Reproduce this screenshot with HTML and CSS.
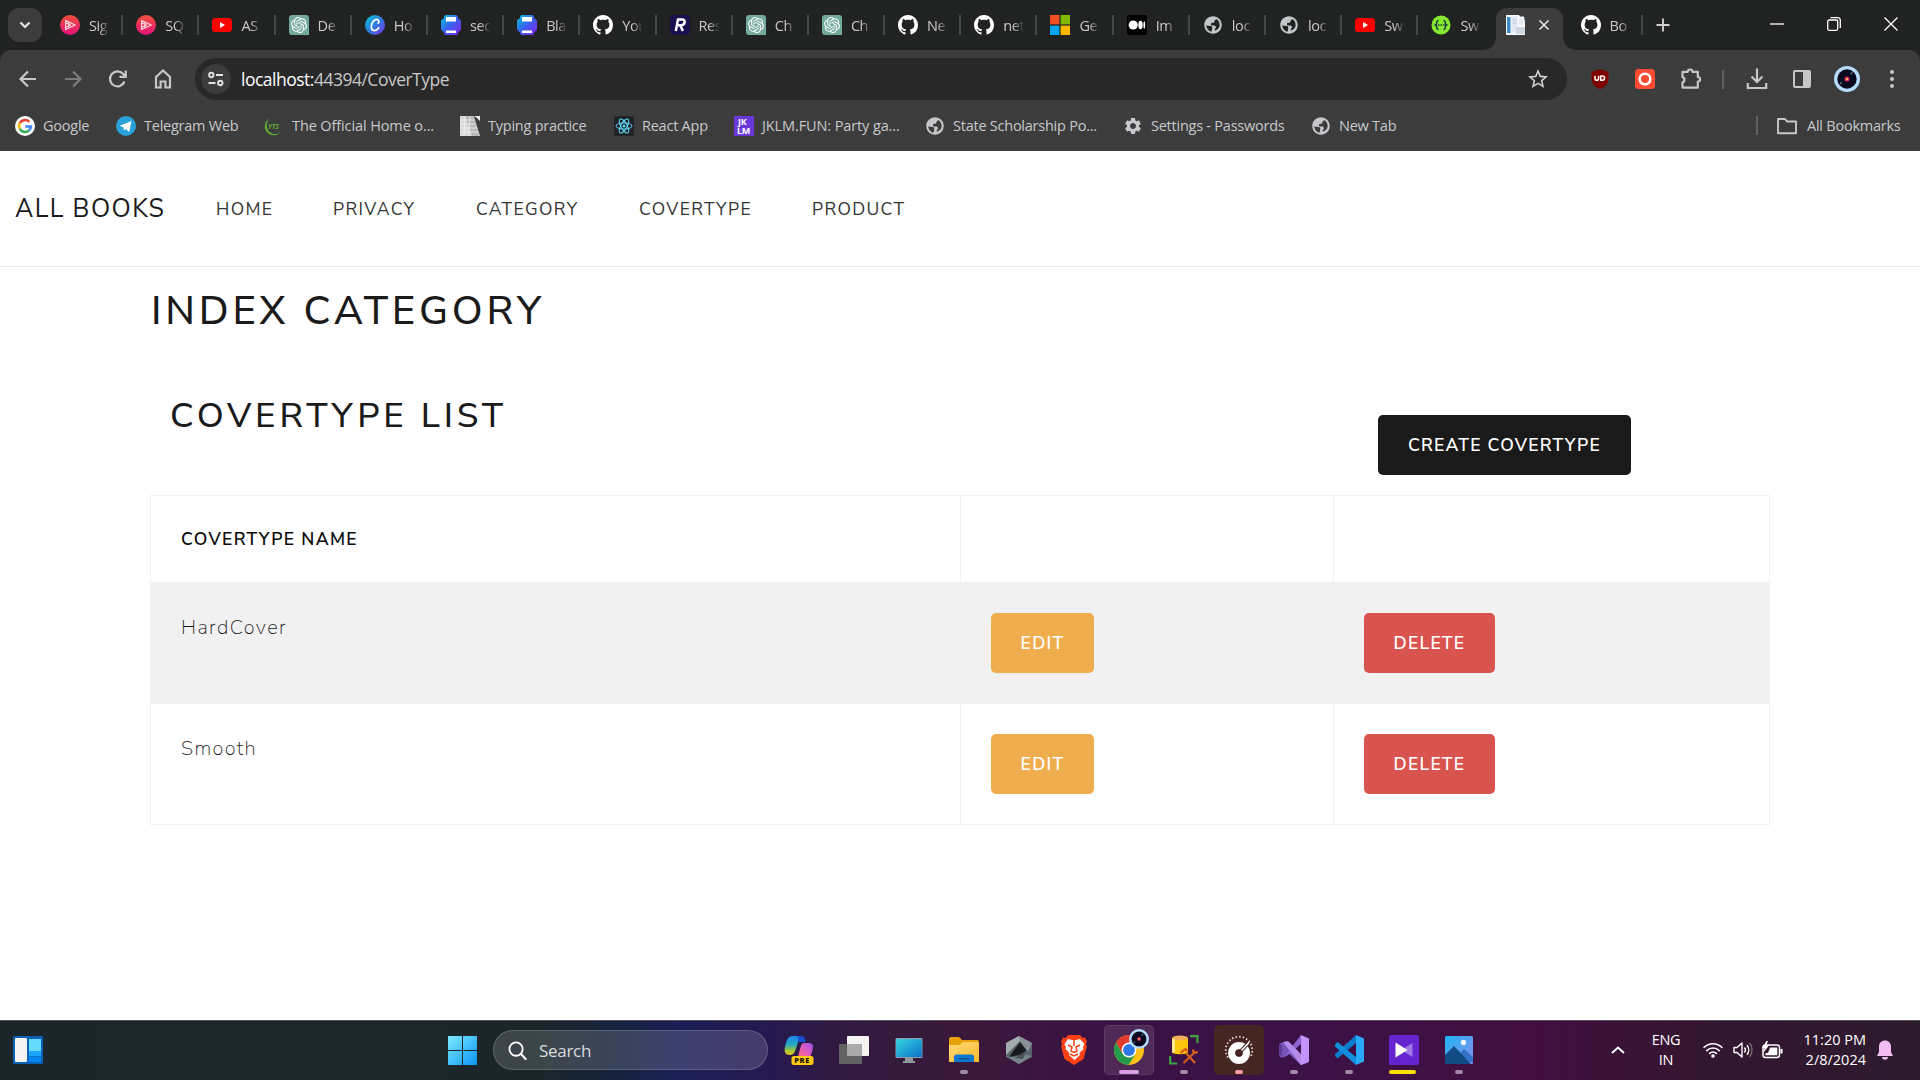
FILE: index.html
```html
<!DOCTYPE html>
<html lang="en">
<head>
<meta charset="utf-8">
<title>Index Category</title>
<link rel="stylesheet" href="styles.css">
</head>
<body>
<svg width="0" height="0" class="defs" aria-hidden="true">
  <defs>
    <linearGradient id="gPlay" x1="0" y1="0" x2="0" y2="1"><stop offset="0" stop-color="#f0503a"/><stop offset="1" stop-color="#e6127e"/></linearGradient>
    <linearGradient id="gCanva" x1="0" y1="0" x2="1" y2="1"><stop offset="0" stop-color="#06c3cc"/><stop offset=".5" stop-color="#2f7fe0"/><stop offset="1" stop-color="#7d2ae8"/></linearGradient>
    <linearGradient id="gPrint" x1="0" y1="0" x2="1" y2="1"><stop offset="0" stop-color="#04c8dc"/><stop offset=".5" stop-color="#3b5fee"/><stop offset="1" stop-color="#8a22f0"/></linearGradient>
    <linearGradient id="gStart" x1="0" y1="0" x2="1" y2="1"><stop offset="0" stop-color="#7deaff"/><stop offset="1" stop-color="#0a95f5"/></linearGradient>
    <linearGradient id="gScreen" x1="0" y1="0" x2="1" y2="1"><stop offset="0" stop-color="#35d5e4"/><stop offset="1" stop-color="#0b72c6"/></linearGradient>
    <linearGradient id="gFolder" x1="0" y1="0" x2="1" y2="1"><stop offset="0" stop-color="#ffdb74"/><stop offset="1" stop-color="#fbb92e"/></linearGradient>
    <linearGradient id="gCopA" x1="0" y1="0" x2="0" y2="1"><stop offset="0" stop-color="#1787e8"/><stop offset=".45" stop-color="#27a9c4"/><stop offset=".75" stop-color="#96c83c"/><stop offset="1" stop-color="#f7c61d"/></linearGradient>
    <linearGradient id="gCopB" x1="1" y1="0" x2="0" y2="1"><stop offset="0" stop-color="#9c4ff0"/><stop offset=".5" stop-color="#ee5fae"/><stop offset="1" stop-color="#ff7a45"/></linearGradient>
    <linearGradient id="gPhoto" x1="0" y1="0" x2="1" y2="1"><stop offset="0" stop-color="#1fb4f0"/><stop offset="1" stop-color="#8b8cf0"/></linearGradient>
    <symbol id="play" viewBox="0 0 20 20"><circle cx="10" cy="10" r="10" fill="url(#gPlay)"/><path d="M5.600 5.600v8.800L15.300 10zM5.600 7.800l5 2.200-5 2.200M8.800 7v6" fill="none" stroke="#ffd5d8" stroke-width="1.200" stroke-linejoin="round"/></symbol>
    <symbol id="youtube" viewBox="0 0 20 20"><rect y="3" width="20" height="14" rx="3.600" fill="#f00"/><path d="M8 7v6l5-3z" fill="#fff"/></symbol>
    <symbol id="gpt" viewBox="0 0 20 20"><path d="M3 0h14a3 3 0 0 1 3 3v17H3a3 3 0 0 1-3-3V3a3 3 0 0 1 3-3z" fill="#74aa9c"/><g transform="translate(2 2) scale(.667)" fill="#fff"><path d="M22.2819 9.8211a5.9847 5.9847 0 0 0-.5157-4.9108 6.0462 6.0462 0 0 0-6.5098-2.9A6.0651 6.0651 0 0 0 4.9807 4.1818a5.9847 5.9847 0 0 0-3.9977 2.9 6.0462 6.0462 0 0 0 .7427 7.0966 5.98 5.98 0 0 0 .511 4.9107 6.051 6.051 0 0 0 6.5146 2.9001A5.9847 5.9847 0 0 0 13.2599 24a6.0557 6.0557 0 0 0 5.7718-4.2058 5.9894 5.9894 0 0 0 3.9977-2.9001 6.0557 6.0557 0 0 0-.7475-7.0729zm-9.022 12.6081a4.4755 4.4755 0 0 1-2.8764-1.0408l.1419-.0804 4.7783-2.7582a.7948.7948 0 0 0 .3927-.6813v-6.7369l2.02 1.1686a.071.071 0 0 1 .038.052v5.5826a4.504 4.504 0 0 1-4.4945 4.4944zm-9.6607-4.1254a4.4708 4.4708 0 0 1-.5346-3.0137l.142.0852 4.783 2.7582a.7712.7712 0 0 0 .7806 0l5.8428-3.3685v2.3324a.0804.0804 0 0 1-.0332.0615L9.74 19.9502a4.4992 4.4992 0 0 1-6.1408-1.6464zM2.3408 7.8956a4.485 4.485 0 0 1 2.3655-1.9728V11.6a.7664.7664 0 0 0 .3879.6765l5.8144 3.3543-2.0201 1.1685a.0757.0757 0 0 1-.071 0l-4.8303-2.7865A4.504 4.504 0 0 1 2.3408 7.872zm16.5963 3.8558L13.1038 8.364 15.1192 7.2a.0757.0757 0 0 1 .071 0l4.8303 2.7913a4.4944 4.4944 0 0 1-.6765 8.1042v-5.6772a.79.79 0 0 0-.407-.667zm2.0107-3.0231l-.142-.0852-4.7735-2.7818a.7759.7759 0 0 0-.7854 0L9.409 9.2297V6.8974a.0662.0662 0 0 1 .0284-.0615l4.8303-2.7866a4.4992 4.4992 0 0 1 6.6802 4.66zM8.3065 12.863l-2.02-1.1638a.0804.0804 0 0 1-.038-.0567V6.0742a4.4992 4.4992 0 0 1 7.3757-3.4537l-.142.0805L8.704 5.459a.7948.7948 0 0 0-.3927.6813zm1.0976-2.3654l2.602-1.4998 2.6069 1.4998v2.9994l-2.5974 1.4997-2.6067-1.4997Z"/></g></symbol>
    <symbol id="canva" viewBox="0 0 20 20"><circle cx="10" cy="10" r="10" fill="url(#gCanva)"/><path d="M13.200 8.200c1.300-1.600.6-3.800-1.400-3.800-3 0-5.500 3.800-5.500 7.200 0 2.500 1.300 4 3.200 4 1.900 0 3.400-1.300 4.300-2.900" fill="none" stroke="#fff" stroke-width="1.700" stroke-linecap="round"/></symbol>
    <symbol id="printer" viewBox="0 0 20 20"><path d="M4.500 0h11l1.500 1.500V3l3 2.500v9L17.500 17 16 20H4l-1.500-3L0 14.500v-9L3 3V1.500z" fill="url(#gPrint)"/><path d="M5 2h10v4.500H5zM5 15.500h10V18H5z" fill="#fff"/></symbol>
    <symbol id="github" viewBox="0 0 16 16"><path fill="#fff" d="M8 0C3.58 0 0 3.58 0 8c0 3.54 2.29 6.53 5.47 7.59.4.07.55-.17.55-.38 0-.19-.01-.82-.01-1.49-2.01.37-2.53-.49-2.69-.94-.09-.23-.48-.94-.82-1.13-.28-.15-.68-.52-.01-.53.63-.01 1.08.58 1.23.82.72 1.21 1.87.87 2.33.66.07-.52.28-.87.51-1.07-1.78-.2-3.64-.89-3.64-3.95 0-.87.31-1.59.82-2.15-.08-.2-.36-1.02.08-2.12 0 0 .67-.21 2.2.82.64-.18 1.32-.27 2-.27.68 0 1.36.09 2 .27 1.53-1.04 2.2-.82 2.2-.82.44 1.1.16 1.92.08 2.12.51.56.82 1.27.82 2.15 0 3.07-1.87 3.75-3.65 3.95.29.25.54.73.54 1.48 0 1.07-.01 1.93-.01 2.2 0 .21.15.46.55.38A8.013 8.013 0 0016 8c0-4.42-3.58-8-8-8z"/></symbol>
    <symbol id="rsq" viewBox="0 0 20 20"><rect width="20" height="20" rx="4.500" fill="#1b1150"/><path d="M5.800 16 8 4.500h4.200c3.600 0 3.200 5.300-.7 5.800H7.300M10.200 10.300l2.700 5.700" fill="none" stroke="#fff" stroke-width="2.500"/></symbol>
    <symbol id="msft" viewBox="0 0 20 20"><path fill="#f25022" d="M0 0h9.400v9.400H0z"/><path fill="#7fba00" d="M10.600 0H20v9.400h-9.400z"/><path fill="#00a4ef" d="M0 10.600h9.400V20H0z"/><path fill="#ffb900" d="M10.600 10.600H20V20h-9.400z"/></symbol>
    <symbol id="medium" viewBox="0 0 20 20"><rect width="20" height="20" rx="2" fill="#000"/><circle cx="6.200" cy="10" r="4.600" fill="#fff"/><ellipse cx="13.500" cy="10" rx="2.200" ry="4.300" fill="#fff"/><ellipse cx="17.300" cy="10" rx=".9" ry="3.800" fill="#fff"/></symbol>
    <symbol id="globe" viewBox="0 0 24 24"><path fill="currentColor" d="M12 1.500C6.200 1.500 1.500 6.200 1.500 12S6.200 22.500 12 22.500 22.500 17.800 22.500 12 17.800 1.500 12 1.500zm-1.500 18.400C6.700 19.300 4 16 4 12.200c.9.600 2 .8 3.200.8l2.300.2c1 .1 1.500.9 1.500 1.800v1.500c0 .9-.3 1.700-.5 2.400zM14 18.800v-1.300c0-1.200 1.500-1.600 1.500-2.800 0-1.400-1-2.200-2.400-2.200h-2c-.9 0-1.600-.7-1.600-1.500 0-1 .8-1.600 1.800-1.600h1c1 0 1.500-.8 1.500-1.800V6.300c1.200 0 2-.7 2-1.500 2.600 1.400 4.200 4.100 4.200 7.200 0 3.200-2.400 5.800-6 6.800z"/></symbol>
    <symbol id="swagger" viewBox="0 0 20 20"><circle cx="10" cy="10" r="9.500" fill="#85ea2d"/><path d="M7.500 5.500c-3 0-.5 3.500-3 4.500 2.500 1 0 4.500 3 4.500M12.500 5.500c3 0 .5 3.500 3 4.500-2.500 1 0 4.500-3 4.500" fill="none" stroke="#173647" stroke-width="1.500"/><path d="M7 10h6.500" stroke="#173647" stroke-width="1.600" stroke-dasharray="1.500 1"/></symbol>
    <symbol id="vinyl" viewBox="0 0 26 26"><circle cx="13" cy="13" r="13" fill="#b5dcfb"/><circle cx="13" cy="13" r="9.700" fill="#080a20"/><path d="M16.500 8.500l2-2.500M7.500 16l-1 2.500" stroke="#4b5268" stroke-width="1.800"/><circle cx="13" cy="13" r="2.600" fill="#d2225e"/><circle cx="13" cy="13" r="1.200" fill="#ffb25a"/></symbol>
  </defs>
</svg>

<div class="screen">
  <header class="browser">
    <div class="tabstrip">
      <div class="tab-search"><svg viewBox="0 0 16 16"><path d="M4 5.800l4 4 4-4" fill="none" stroke="#e3e3e3" stroke-width="2"/></svg></div>
      <div class="tabs">
        <div class="tab"><svg><use href="#play"/></svg><span>Sig</span></div>
        <div class="tab"><svg><use href="#play"/></svg><span>SQ</span></div>
        <div class="tab"><svg><use href="#youtube"/></svg><span>AS</span></div>
        <div class="tab"><svg><use href="#gpt"/></svg><span>De</span></div>
        <div class="tab"><svg><use href="#canva"/></svg><span>Ho</span></div>
        <div class="tab"><svg><use href="#printer"/></svg><span>sec</span></div>
        <div class="tab"><svg><use href="#printer"/></svg><span>Bla</span></div>
        <div class="tab"><svg><use href="#github"/></svg><span>You</span></div>
        <div class="tab"><svg><use href="#rsq"/></svg><span>Res</span></div>
        <div class="tab"><svg><use href="#gpt"/></svg><span>Ch</span></div>
        <div class="tab"><svg><use href="#gpt"/></svg><span>Ch</span></div>
        <div class="tab"><svg><use href="#github"/></svg><span>Ne</span></div>
        <div class="tab"><svg><use href="#github"/></svg><span>net</span></div>
        <div class="tab"><svg><use href="#msft"/></svg><span>Ge</span></div>
        <div class="tab"><svg><use href="#medium"/></svg><span>Im</span></div>
        <div class="tab"><svg class="gray"><use href="#globe"/></svg><span>loc</span></div>
        <div class="tab"><svg class="gray"><use href="#globe"/></svg><span>loc</span></div>
        <div class="tab"><svg><use href="#youtube"/></svg><span>Sw</span></div>
        <div class="tab before-active"><svg><use href="#swagger"/></svg><span>Sw</span></div>
        <div class="tab active">
          <svg viewBox="0 0 20 20"><path d="M0 0h13l1 1.500h4L19 7v13H0z" fill="#f8fafc"/><path d="M1 2h3.500v16H1z" fill="#3b8bc8"/><path d="M5.500 1.500h6v16h-6z" fill="#dfe8f1"/><path d="M13 3h4v7h-4z" fill="#e6ebf0"/><path d="M10 12h9v7h-9z" fill="#d0d8e0"/><path d="M6.500 5h4M6.500 8h4M11 14h7" stroke="#b8cadb"/></svg>
          <svg class="close" viewBox="0 0 12 12"><path d="M1.500 1.500l9 9m0-9l-9 9" stroke="#e3e3e3" stroke-width="1.700"/></svg>
        </div>
        <div class="tab after-active"><svg><use href="#github"/></svg><span>Bo</span></div>
      </div>
      <svg class="newtab" viewBox="0 0 14 14"><path d="M7 .5v13M.5 7h13" stroke="#d0d0d0" stroke-width="1.900"/></svg>
      <div class="winctl">
        <svg viewBox="0 0 14 14"><path d="M0 7h14" stroke="#fff" stroke-width="1.300"/></svg>
        <svg viewBox="0 0 14 14"><rect x=".7" y="3" width="10" height="10.300" rx="1.500" fill="none" stroke="#fff" stroke-width="1.300"/><path d="M3.500.7h7.300a2.500 2.500 0 0 1 2.500 2.500V11" fill="none" stroke="#fff" stroke-width="1.300"/></svg>
        <svg viewBox="0 0 14 14"><path d="M.5.5l13 13m0-13l-13 13" stroke="#fff" stroke-width="1.300"/></svg>
      </div>
    </div>

    <div class="toolbar">
      <div class="navbtns">
        <svg viewBox="0 0 24 24"><path d="M20 12H5M12 4.500L4.500 12l7.500 7.500" /></svg>
        <svg viewBox="0 0 24 24" class="off"><path d="M4 12H19M12 4.500l7.500 7.500-7.500 7.500"/></svg>
        <svg viewBox="0 0 24 24"><path d="M18.500 14.500A7.500 7.500 0 1 1 17 6.800l2.500 2.700M19.800 3.500v6.300h-6.300"/></svg>
        <svg viewBox="0 0 24 24"><path d="M5 10V20.500h4.600V14.500h4.800v6H19V10L12 3.500z"/></svg>
      </div>
      <div class="omnibox">
        <div class="site"><svg viewBox="0 0 18 18"><g fill="none" stroke="#e3e3e3" stroke-width="1.900"><circle cx="4.300" cy="5" r="2.200"/><path d="M9 5h7M1.500 13h7"/><circle cx="13.300" cy="13" r="2.200"/></g></svg></div>
        <div class="url"><b>localhost:</b>44394/CoverType</div>
        <svg class="star" viewBox="0 0 24 24"><path fill="#d0d0d0" d="M22 9.240l-7.190-.62L12 2 9.190 8.630 2 9.240l5.460 4.730L5.820 21 12 17.270 18.180 21l-1.630-7.030L22 9.240zM12 15.400l-3.760 2.270 1-4.280-3.320-2.880 4.380-.38L12 6.100l1.710 4.040 4.380.38-3.320 2.880 1 4.280L12 15.400z"/></svg>
      </div>
      <div class="ext">
        <svg class="i20" viewBox="0 0 20 20"><path d="M10 0l8.500 3v6.500c0 5-3.500 8.500-8.500 10.500C5 18 1.500 14.500 1.500 9.500V3z" fill="#800000"/><path d="M5 6.800V9.500a1.800 1.800 0 0 0 3.600 0V6.800M10.800 6.500v4.700h1.700a2.100 2.100 0 0 0 0-4.200h-1.700" fill="none" stroke="#fff" stroke-width="1.500"/></svg>
        <svg class="i20" viewBox="0 0 20 20"><rect width="20" height="20" rx="3.500" fill="#ff4b32"/><circle cx="10" cy="10" r="5.300" fill="none" stroke="#fff" stroke-width="2.500"/></svg>
        <svg class="i24" viewBox="0 0 24 24"><path d="M4.500 4.800h5.300a2.300 2.300 0 0 1 4.600 0h5.400v5.200a2.300 2.300 0 0 1 0 4.600v6H4.500v-5.300a2.700 2.700 0 0 0 0-5.200z" fill="none" stroke="#c7c7c7" stroke-width="2.200" stroke-linejoin="round"/></svg>
        <i class="bar"></i>
        <svg class="i24" viewBox="0 0 24 24"><path d="M12 1.500V15M6.500 9.500l5.500 5.500 5.500-5.500M2.800 16v5h18.400v-5" fill="none" stroke="#c7c7c7" stroke-width="2.200"/></svg>
        <svg class="i20" viewBox="0 0 20 20"><rect x="2" y="2" width="16" height="16" rx="1" fill="none" stroke="#c7c7c7" stroke-width="2"/><path d="M11 2h7v16h-7z" fill="#c7c7c7"/></svg>
        <svg class="i26"><use href="#vinyl"/></svg>
        <svg class="i20" viewBox="0 0 20 20"><g fill="#c7c7c7"><circle cx="10" cy="3" r="2"/><circle cx="10" cy="10" r="2"/><circle cx="10" cy="17" r="2"/></g></svg>
      </div>
    </div>

    <nav class="bookmarks">
      <a><svg viewBox="0 0 20 20"><circle cx="10" cy="10" r="10" fill="#fff"/><g fill="none" stroke-width="2.600"><path d="M14.300 5.800A6 6 0 0 0 4.800 7.200" stroke="#ea4335"/><path d="M4.800 7.200a6 6 0 0 0 0 5.600" stroke="#fbbc05"/><path d="M4.800 12.800a6 6 0 0 0 9.300 1.600" stroke="#34a853"/><path d="M14.100 14.400A6 6 0 0 0 16 10.500h-5.800" stroke="#4285f4"/></g></svg><span>Google</span></a>
      <a><svg viewBox="0 0 20 20"><circle cx="10" cy="10" r="10" fill="#2aa1da"/><path d="M3.800 9.800L15.500 5l-2.300 11-3.600-3-1.700 1.700-.3-3.200z" fill="#fff"/></svg><span>Telegram Web</span></a>
      <a><svg viewBox="0 0 20 20"><path d="M5 2C-1 7-.500 16 6 18.500c4 1.500 9 .5 11-3-3 3-7.500 3.500-10.500 1C2 13.500 2 7 5 2z" fill="#5fa83a"/><text x="4" y="12.500" class="yts">YTS</text></svg><span class="wide">The Official Home o...</span></a>
      <a><svg viewBox="0 0 20 20"><path d="M0 0h13l7 20H0z" fill="#d9d9d9"/><path d="M5 0h9l6 20h-8z" fill="#b9b9b9"/><path d="M0 4h14M0 8h15M0 12h17M1 16h17M5 0l-1 20M10 0l-1 20" stroke="#f0f0f0" stroke-width=".8"/><path d="M14 0h6v5l-3-3z" fill="#eee"/></svg><span>Typing practice</span></a>
      <a><svg viewBox="0 0 20 20"><rect width="20" height="20" rx="2" fill="#202327"/><g fill="none" stroke="#61dafb" stroke-width="1"><ellipse cx="10" cy="10" rx="8" ry="3.100"/><ellipse cx="10" cy="10" rx="8" ry="3.100" transform="rotate(60 10 10)"/><ellipse cx="10" cy="10" rx="8" ry="3.100" transform="rotate(120 10 10)"/></g><circle cx="10" cy="10" r="1.500" fill="#61dafb"/></svg><span>React App</span></a>
      <a><svg viewBox="0 0 20 20"><path d="M0 0h20v20H0z" fill="#6a38d8"/><text x="4" y="8.700" class="jk">JK</text><text x="3" y="17.600" class="jk">LM</text></svg><span class="wide">JKLM.FUN: Party ga...</span></a>
      <a><svg class="gray"><use href="#globe"/></svg><span>State Scholarship Po...</span></a>
      <a><svg viewBox="0 0 24 24"><path fill="#c7c9cc" d="M19.140 12.940c.04-.3.060-.61.060-.94 0-.32-.02-.64-.07-.94l2.030-1.580c.18-.14.23-.41.120-.61l-1.920-3.320c-.12-.22-.37-.29-.59-.22l-2.390.96c-.5-.38-1.030-.7-1.620-.94l-.36-2.540c-.04-.24-.24-.41-.48-.41h-3.840c-.24 0-.43.170-.47.410l-.36 2.540c-.59.240-1.130.570-1.620.940l-2.390-.96c-.22-.08-.47 0-.59.220L2.740 8.870c-.12.210-.08.470.120.610l2.030 1.580c-.05.300-.09.630-.09.940s.020.640.070.940l-2.030 1.580c-.18.140-.23.410-.12.610l1.920 3.320c.12.220.37.290.59.220l2.390-.96c.5.380 1.030.700 1.620.940l.36 2.540c.05.240.24.410.48.410h3.840c.24 0 .44-.17.470-.41l.36-2.540c.59-.24 1.130-.56 1.620-.94l2.390.96c.22.080.47 0 .59-.22l1.920-3.320c.12-.22.070-.47-.12-.61l-2.010-1.580zM12 15.600c-1.980 0-3.600-1.620-3.600-3.600s1.620-3.600 3.600-3.600 3.600 1.620 3.600 3.600-1.620 3.600-3.600 3.600z"/></svg><span>Settings - Passwords</span></a>
      <a><svg class="gray"><use href="#globe"/></svg><span>New Tab</span></a>
      <i class="bar"></i>
      <a class="all"><svg viewBox="0 0 20 20"><path d="M1 3.200V17.300h18V5.500h-9L8 3H1z" fill="none" stroke="#c7c7c7" stroke-width="1.900" stroke-linejoin="round"/></svg><span>All Bookmarks</span></a>
    </nav>
  </header>

  <main class="page">
    <nav class="navbar">
      <a class="brand">ALL BOOKS</a>
      <a>HOME</a><a>PRIVACY</a><a>CATEGORY</a><a>COVERTYPE</a><a>PRODUCT</a>
    </nav>
    <div class="container">
      <h1>INDEX CATEGORY</h1>
      <div class="listhead">
        <h2>COVERTYPE LIST</h2>
        <a class="btn dark">CREATE COVERTYPE</a>
      </div>
      <table>
        <colgroup><col class="c1"><col class="c2"><col class="c3"></colgroup>
        <thead><tr><th>COVERTYPE NAME</th><th></th><th></th></tr></thead>
        <tbody>
          <tr class="odd"><td>HardCover</td><td><a class="btn edit">EDIT</a></td><td><a class="btn delete">DELETE</a></td></tr>
          <tr><td>Smooth</td><td><a class="btn edit">EDIT</a></td><td><a class="btn delete">DELETE</a></td></tr>
        </tbody>
      </table>
    </div>
  </main>

  <footer class="taskbar">
    <svg class="widgets" viewBox="0 0 30 28"><rect width="30" height="28" rx="1.500" fill="#0c62b5"/><rect x="2" y="2" width="12" height="24" rx="1" fill="#f4f4f4"/><path d="M16 3h12v12H16z" fill="#66d9ff"/><path d="M16 15h12v5H16z" fill="#1ea4fa"/><path d="M16 20.500h12V26H16z" fill="#0785ee"/></svg>
    <svg class="start" viewBox="0 0 30 30"><path d="M0 0h14.500v14.500H0zM15.500 0H30v14.500H15.500zM0 15.500h14.500V30H0zM15.500 15.500H30V30H15.500z" fill="url(#gStart)"/></svg>
    <div class="search"><svg viewBox="0 0 20 20"><circle cx="8.500" cy="8.500" r="7" fill="none" stroke="#fff" stroke-width="1.900"/><path d="M13.500 13.500l5 5.500" stroke="#fff" stroke-width="2.200" stroke-linecap="round"/></svg><span>Search</span></div>
    <div class="apps">
      <div class="app"><svg viewBox="0 0 30 30"><path d="M8 1h9c-2 2-3 6-4.500 11-1.300 5-3 8-6.500 8-5 0-6-3.500-5-8C2.500 5 4 1 8 1z" fill="url(#gCopA)"/><path d="M12 1h5c3 0 4 2 4.800 6h-7C14.500 3 13.500 1.500 12 1z" fill="#184fd0"/><path d="M20 8h5c4 0 4.500 3 3.500 7-1.500 6-3 9-7 11H10c3-1 4-4 5-8 1.400-5 2-10 5-10z" fill="url(#gCopB)"/><rect x="7.500" y="21" width="22" height="9" rx="2.500" fill="#ffc90e"/><text x="10.200" y="28.400" class="pre">PRE</text></svg></div>
      <div class="app"><svg viewBox="0 0 30 30"><rect x="8" y="1" width="22" height="20" rx="1" fill="#f3f3f3"/><rect y="9" width="23" height="20" rx="1" fill="#626262"/><path d="M8 9h15v12H8z" fill="#a9a9a9"/></svg></div>
      <div class="app"><svg viewBox="0 0 30 30"><path d="M11 23h8v3h2v2H9v-2h2z" fill="#8d979e"/><rect x="1.500" y="3" width="27" height="20" rx="1" fill="#8f9ba5"/><path d="M2.200 4h25.600v18H2.200z" fill="url(#gScreen)"/></svg></div>
      <div class="app run"><svg viewBox="0 0 30 30"><path d="M0 4c0-1 .8-2 2-2h8l3 3h15c1.200 0 2 .8 2 2v6H0z" fill="#e8a30c"/><path d="M0 10l11 0 3-3h14c1 0 2 .8 2 2v18H0z" fill="url(#gFolder)"/><path d="M5 27v-5c0-1.500 1-2.500 2.500-2.500h15c1.500 0 2.500 1 2.500 2.500v5z" fill="#0b79d0"/><path d="M10 23h10v1.500H10z" fill="#0a4f99"/></svg></div>
      <div class="app"><svg viewBox="0 0 30 30"><path d="M15 1l13 7v14l-13 7L2 22V8z" fill="#59636b"/><path d="M15 1l13 7-4 9-8-11z" fill="#879197"/><path d="M2 8l13-7 1 5L5 17l-3 3z" fill="#a3acb1"/><path d="M2 21l8 1 9-3 9 2-13 8z" fill="#79838a"/><path d="M16 7l6.500 8.500L16 20 5 22z" fill="#171b20"/><path d="M22.500 15.500L19 24l-9-1 6-3z" fill="#4b545b"/></svg></div>
      <div class="app"><svg viewBox="0 0 30 30"><path d="M9 0h12l2.500 3 2.500-.5 1.800 4-1 3L28 11l-3.500 13L15 30l-9.500-6L2 11l1.200-1.500-1-3 1.800-4 2.500.5z" fill="#ff4216"/><path d="M9 4l4 1h4l4-1 4.500 5-1.500 3 .5 2-4 4 .5 2-5.500 5-5.500-5 .5-2-4-4 .5-2-1.500-3z" fill="#fff"/><path d="M9 10l4 2-1 4 3 1.500 3-1.500-1-4 4-2M11 19l4 2 4-2M15 5v6" fill="none" stroke="#ff4216" stroke-width="1.500"/></svg></div>
      <div class="app run focused"><svg viewBox="0 0 30 30"><circle cx="15" cy="15" r="15" fill="#fbc116"/><path d="M2 7.500A15 15 0 0 1 28 7.500H15L8.500 19z" fill="#e33b2e"/><path d="M2 7.500A15 15 0 0 0 14.500 30l7-11.300L8.500 19z" fill="#239b4a"/><circle cx="15" cy="15" r="7.400" fill="#fff"/><circle cx="15" cy="15" r="5.900" fill="#2b78e4"/></svg><svg class="badge"><use href="#vinyl"/></svg></div>
      <div class="app run"><svg viewBox="0 0 30 30"><path d="M3 3v14c0 3 16 3 16 0V3z" fill="#fbc80d"/><ellipse cx="11" cy="3" rx="8" ry="2.600" fill="#f2ae56"/><path d="M4.500 4v13.500" stroke="#ffe98a" stroke-width="3"/><path d="M21 1.200h7.500V8M1.200 21v7.500h7" fill="none" stroke="#3da541" stroke-width="2.200"/><path d="M14.500 28L25 18M17 18l9 10" fill="none" stroke="#d9601c" stroke-width="2"/><path d="M11.500 18l5-4 2.500 2.500M24 14.500l.8 3.500 4-.8" fill="none" stroke="#d9601c" stroke-width="2.300"/></svg></div>
      <div class="app run gauge"><svg viewBox="0 0 30 30"><path d="M4 22.500A13.300 13.300 0 1 1 26 22.500" fill="none" stroke="#e4dad5" stroke-width="1.800" stroke-dasharray="1.500 2.100"/><circle cx="15" cy="18" r="7.300" fill="none" stroke="#fff" stroke-width="7.200"/><path d="M16.500 16.500l6-6.500" stroke="#452622" stroke-width="3.600"/><path d="M15 18l10-10.500" stroke="#fff" stroke-width="1.600"/><circle cx="15" cy="18" r="3.600" fill="#452622"/></svg></div>
      <div class="app run"><svg viewBox="0 0 30 30"><path d="M0 9l4-2 18 15V30L9 18l-6 5-3-2z" fill="#7754b8"/><path d="M0 9l3 1v10l-3 1z" fill="#5b3b95"/><path d="M4 23L22 0v9L9 20l-5 3z" fill="#8a63cf"/><path d="M4 7l5-1 21 21-8 3z" fill="#b48bea"/><path d="M22 0l8 3.500v23L22 30z" fill="#c193fb"/></svg></div>
      <div class="app run"><svg viewBox="0 0 30 30"><path d="M22 0L1 19v2l2.500 2.500L22 8z" fill="#0b7bcb"/><path d="M1 9.500L3.500 7 22 22v8L1 11.500z" fill="#1090df"/><path d="M22 0l8 3.500v23L22 30z" fill="#29a8f5"/></svg></div>
      <div class="app run yellow"><svg viewBox="0 0 30 30"><rect width="30" height="30" rx="1.500" fill="#6524cf"/><path d="M23.500 8v14L12 15z" fill="#9e76e5"/><path d="M6.500 7.500v15L18.500 15z" fill="#fff"/></svg></div>
      <div class="app run"><svg viewBox="0 0 30 30"><rect x="1" y="1" width="28" height="28" rx="1.500" fill="url(#gPhoto)"/><path d="M14 20l6-6 9 8v5H14z" fill="#3373ca"/><path d="M1 20l9-9 17 18H2c-1 0-1-1-1-1z" fill="#114d84"/><circle cx="19.500" cy="7.500" r="2.700" fill="#f4f7fb"/></svg></div>
    </div>
    <div class="tray">
      <svg class="chev" viewBox="0 0 14 8"><path d="M1 7l6-5.500L13 7" fill="none" stroke="#fff" stroke-width="1.900"/></svg>
      <div class="lang">ENG<br>IN</div>
      <svg class="wifi" viewBox="0 0 20 16"><g fill="none" stroke="#fff" stroke-width="1.500" stroke-linecap="round"><path d="M1 5.500a12.500 12.500 0 0 1 18 0M3.800 8.600a8.700 8.700 0 0 1 12.400 0M6.600 11.400a4.800 4.800 0 0 1 6.800 0"/></g><circle cx="10" cy="14" r="1.800" fill="#fff"/></svg>
      <svg class="vol" viewBox="0 0 20 16"><path d="M1 5.500v5h3L9 15V1L4 5.500z" fill="none" stroke="#fff" stroke-width="1.400" stroke-linejoin="round"/><path d="M11.500 5.500a4 4 0 0 1 0 5M14 3.200a7.500 7.500 0 0 1 0 9.600" fill="none" stroke="#fff" stroke-width="1.400"/><path d="M16.500 1a11 11 0 0 1 0 14" fill="none" stroke="#75636f" stroke-width="1.400"/></svg>
      <svg class="batt" viewBox="0 0 21 18"><rect x="1" y="4" width="16.500" height="12.500" rx="2.500" fill="none" stroke="#fff" stroke-width="1.500"/><path d="M8 6.500h7.300v7.700H3.500V12H6z" fill="#fff"/><path d="M18.500 8h2v4.500h-2z" fill="#fff"/><path d="M4.500 0L0 7h2.500L1 12l6-7.500H4.300L6 0z" fill="#fff"/></svg>
      <div class="clock">11:20 PM<br>2/8/2024</div>
      <svg class="bell" viewBox="0 0 16 20"><path d="M8 .5c3.600 0 6 2.600 6 6V12l2 4H0l2-4V6.500c0-3.400 2.400-6 6-6zM5 17h6c0 1.800-1.300 2.700-3 2.700S5 18.800 5 17z" fill="#f0bcf2"/></svg>
    </div>
  </footer>
</div>
</body>
</html>
```

FILE: styles.css
```css
* { box-sizing: border-box; }
body { margin: 0; background: #fff; font-family: "Segoe UI", "Open Sans", "Noto Sans", sans-serif; }
.defs { position: absolute; }
.screen { display: flex; flex-direction: column; width: 1920px; height: 1080px; overflow: hidden; }
svg { display: block; flex: none; }
.gray { color: #c4c6c9; }

/* Browser window */
.browser { flex: none; height: 151px; background: #202321; display: flex; flex-direction: column; }
.tabstrip { display: flex; height: 50px; align-items: stretch; }
.tab-search { width: 34px; height: 34px; margin: 8px 3px 0 8px; border-radius: 11px; background: #3c3c3c; display: grid; place-items: center; }
.tab-search svg { width: 18px; height: 18px; }
.tabs { display: flex; }
.tab { width: 76.2px; display: flex; align-items: center; padding-left: 15px; position: relative; }
.tab svg { width: 20px; height: 20px; }
.tab span { margin-left: 9px; white-space: nowrap; font-size: 14.5px; letter-spacing: -.4px; color: #c9cac9; -webkit-mask-image: linear-gradient(90deg, #000 10px, transparent 21px); mask-image: linear-gradient(90deg, #000 10px, transparent 21px); }
.tab::after { content: ""; position: absolute; right: -2px; top: 15px; width: 2px; height: 20px; background: #454746; }
.before-active::after { display: none; }
.active { width: 67px; height: 42px; margin: 8px 0 0 3px; padding: 0 0 8px 10px; background: #3c3c3c; border-radius: 11px 11px 0 0; }
.active::before, .active::after { content: ""; display: block; position: absolute; top: auto; bottom: 0; width: 12px; height: 12px; }
.active::before { left: -12px; background: radial-gradient(circle at 0 0, transparent 11.5px, #3c3c3c 12px); }
.active::after { right: -12px; background: radial-gradient(circle at 100% 0, transparent 11.5px, #3c3c3c 12px); }
.active .close { width: 12px; height: 12px; margin-left: 12px; }
.after-active { width: 78px; padding-left: 18px; }
.newtab { width: 14px; height: 14px; margin: 18px 0 0 15px; }
.winctl { margin-left: auto; padding: 17px 22px 0 0; display: flex; gap: 43px; }
.winctl svg { width: 14px; height: 14px; }

.toolbar { flex: none; height: 58px; background: #3c3c3c; border-radius: 11px 11px 0 0; display: flex; align-items: center; padding: 0 6px 0 16px; }
.navbtns { flex: none; display: flex; gap: 21px; width: 179px; margin-bottom: 1px; }
.navbtns svg { width: 24px; height: 24px; fill: none; stroke: #c7c7c7; stroke-width: 2.2; }
.navbtns .off { stroke: #7d7d7d; }
.omnibox { flex: none; width: 1372px; height: 42px; background: #282828; border-radius: 21px; display: flex; align-items: center; padding: 0 17px 0 6px; }
.site { width: 30px; height: 30px; border-radius: 50%; background: #3c3c3c; display: grid; place-items: center; }
.site svg { width: 18px; height: 18px; }
.url { margin-left: 10px; font-size: 17.5px; letter-spacing: -.5px; color: #c7c7c7; white-space: nowrap; }
.url b { font-weight: 400; color: #fff; }
.star { width: 24px; height: 24px; margin-left: auto; }
.ext { display: grid; grid-template-columns: 45px 45px 45px 22px 45px 45px 46px 44px; justify-items: center; align-items: center; margin-left: 10px; }
.i20 { width: 20px; height: 20px; }
.i24 { width: 24px; height: 24px; }
.i26 { width: 26px; height: 26px; }
.bar { width: 2px; height: 19px; background: #5f6060; }

.bookmarks { flex: none; height: 43px; background: #3c3c3c; display: grid; grid-template-columns: 101px 148px 196px 154px 120px 191px 198px 188px 445px 21px auto; align-items: center; padding: 0 0 8px 15px; }
.bookmarks a { display: flex; align-items: center; gap: 8px; white-space: nowrap; font-size: 14.5px; letter-spacing: -.24px; color: #c7c9cc; }
.bookmarks .wide { letter-spacing: -.11px; }
.bookmarks .all { gap: 10px; }
.bookmarks svg { width: 20px; height: 20px; }
.yts { font: italic 700 7px "Open Sans", sans-serif; fill: #5fa83a; }
.jk { font: 700 9px "Open Sans", sans-serif; fill: #fff; }

/* Web page */
.page { flex: 1; background: #fff; color: #1a1a1a; font-family: "Nunito Sans", "Open Sans", sans-serif; }
.navbar { height: 116px; border-bottom: 1px solid #ececec; display: grid; grid-template-columns: 201px 117px 143px 163px 173px auto; align-items: center; padding: 1px 0 0 15px; font-size: 17.5px; letter-spacing: 1.35px; color: #343434; }
.brand { font-size: 25px; letter-spacing: 1.45px; color: #1a1a1a; }
.container { width: 1620px; margin: 0 auto; }
h1, h2 { font-weight: 500; margin: 0; white-space: nowrap; }
h1 { font-size: 40px; letter-spacing: 3.8px; line-height: 48px; padding: 20px 0 0 1px; }
.listhead { height: 160px; display: flex; justify-content: space-between; padding: 60px 139px 0 20px; }
h2 { font-size: 35px; letter-spacing: 3.85px; line-height: 42px; }
.btn { display: grid; place-items: center; height: 60px; border-radius: 5px; color: #fff; font-weight: 600; font-size: 17.5px; letter-spacing: 1.25px; }
.dark { width: 253px; margin-top: 20px; background: #1a1a1a; }
.edit { width: 103px; background: #f0ad4e; }
.delete { width: 131px; background: #d9534f; }
table { width: 1620px; border-collapse: collapse; table-layout: fixed; }
.c1 { width: 810px; }
.c2 { width: 373px; }
th, td { border: 1px solid #f1f1f1; vertical-align: top; text-align: left; padding: 30px; font-weight: 250; font-size: 20px; letter-spacing: 1.4px; line-height: 30px; }
th { height: 87px; padding: 30px 30px 29px; font-size: 17.5px; font-weight: 650; letter-spacing: 1.35px; line-height: 27px; color: #0c0c0c; }
td { height: 121px; }
.odd td { background: #f1f1f1; }

/* Desktop taskbar */
.taskbar { flex: none; height: 60px; display: flex; align-items: center; padding-bottom: 1px; border-top: 1px solid #56505c; background: linear-gradient(90deg, #1c252b 0, #1b262b 540px, #17233f 620px, #1b1f57 680px, #261950 770px, #331a3e 850px, #39193a 960px, #3b1245 1110px, #3c1146 1300px, #410f3f 1540px, #341630 1700px, #2d1b2e 1920px); color: #fff; }
.widgets { width: 30px; height: 28px; margin: 0 405px 0 13px; }
.start { width: 29px; height: 29px; margin-right: 16px; }
.search { width: 275px; height: 40px; border-radius: 20px; border: 1px solid #ffffff2b; background: #ffffff26; display: flex; align-items: center; padding-left: 14px; gap: 12px; font-size: 17px; letter-spacing: -.3px; color: #d9dadf; }
.search svg { width: 19px; height: 19px; }
.apps { display: flex; gap: 5px; margin-left: 6px; }
.app { width: 50px; height: 50px; display: grid; place-items: center; position: relative; border-radius: 5px; }
.app svg { width: 30px; height: 30px; }
.pre { font: 800 7.5px "Open Sans", sans-serif; letter-spacing: .6px; fill: #1b1500; }
.run::after { content: ""; position: absolute; bottom: 1px; left: 21px; width: 8px; height: 4px; border-radius: 2px; background: #a08ba6; }
.focused { background: #ffffff1a; border: 1px solid #ffffff14; }
.focused::after { left: 14px; bottom: 0; width: 20px; background: #dba0e6; }
.app .badge { position: absolute; width: 20px; height: 20px; right: 4px; top: 3px; }
.gauge { background: #452622; }
.gauge::after { background: #ff9aa4; }
.yellow::after { left: 10px; width: 27px; background: #ffe100; }
.tray { margin-left: auto; display: flex; align-items: center; padding-right: 27px; font-size: 14.5px; line-height: 20px; letter-spacing: -.3px; }
.chev { width: 14px; height: 8px; margin-right: 26px; }
.lang { width: 30px; text-align: center; margin-right: 22px; }
.wifi { width: 20px; height: 16px; margin-right: 10px; }
.vol { width: 20px; height: 16px; margin-right: 9px; }
.batt { width: 21px; height: 18px; }
.clock { width: 83px; text-align: right; margin-right: 11px; white-space: nowrap; letter-spacing: 0; }
.bell { width: 16px; height: 20px; }
```
